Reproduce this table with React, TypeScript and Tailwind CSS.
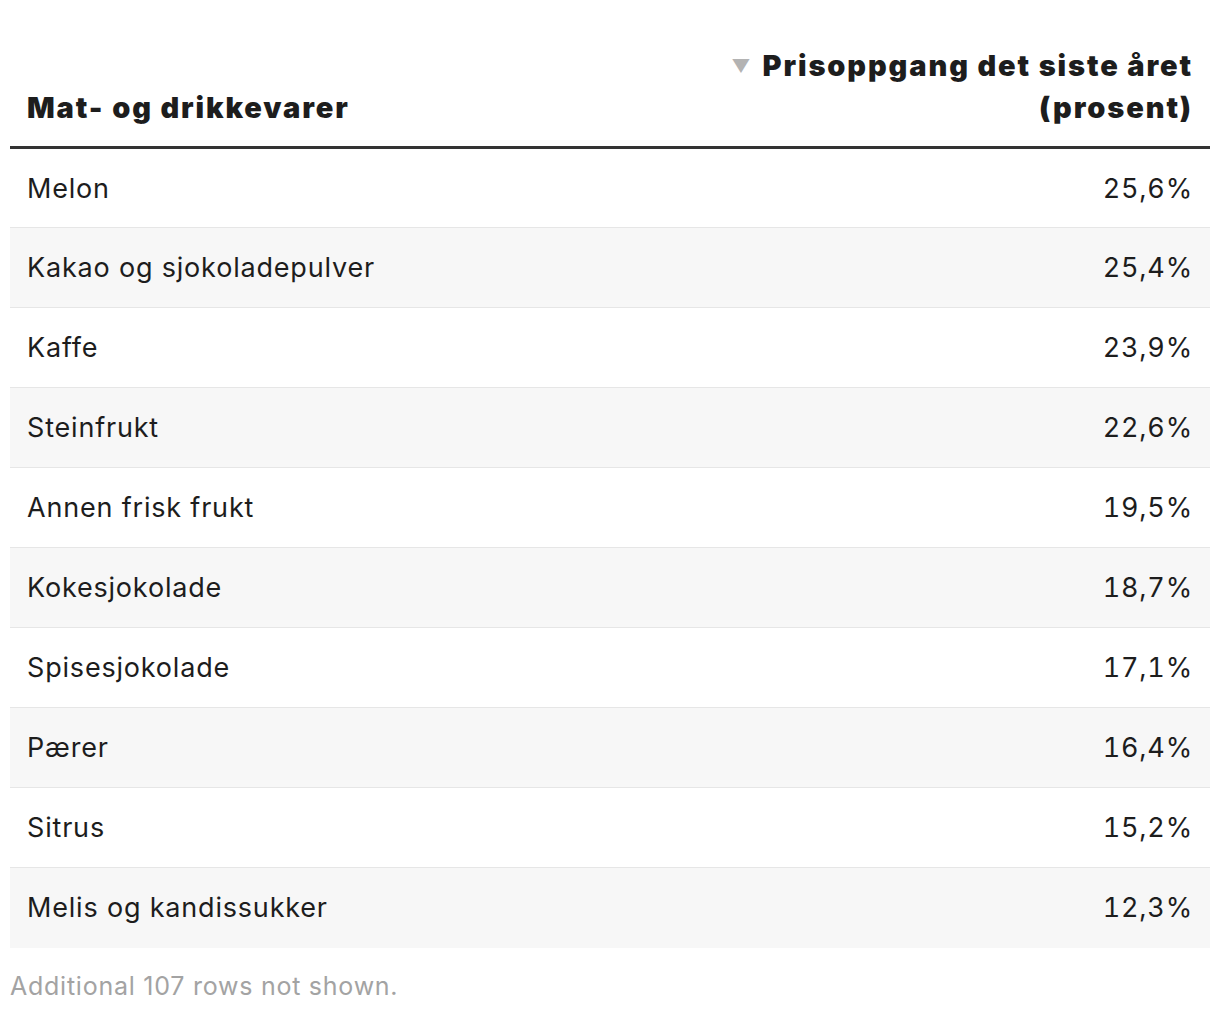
const rows: [string, string][] = [
  ["Melon", "25,6%"],
  ["Kakao og sjokoladepulver", "25,4%"],
  ["Kaffe", "23,9%"],
  ["Steinfrukt", "22,6%"],
  ["Annen frisk frukt", "19,5%"],
  ["Kokesjokolade", "18,7%"],
  ["Spisesjokolade", "17,1%"],
  ["Pærer", "16,4%"],
  ["Sitrus", "15,2%"],
  ["Melis og kandissukker", "12,3%"],
];

export default function App() {
  return (
    <div
      className="bg-white px-[10px] pt-[45px] text-[#1d1d1d]"
      style={{ fontFamily: "Inter, Roboto, 'Liberation Sans', sans-serif" }}
    >
      <table className="w-full border-collapse">
        <thead>
          <tr className="border-b-[3px] border-[#333333]">
            <th className="px-[17px] pb-[17px] text-left align-bottom text-[29px] font-black leading-[42px] tracking-[0.065em]">
              Mat- og drikkevarer
            </th>
            <th className="px-[17px] pb-[17px] text-right align-bottom text-[29px] font-black leading-[42px] tracking-[0.065em]">
              <span className="mr-[12px] inline-block align-[4px] text-[18px] tracking-normal text-[#b3b3b3]">▼</span>
              Prisoppgang det siste året
              <br />
              (prosent)
            </th>
          </tr>
        </thead>
        <tbody>
          {rows.map(([name, value], i) => (
            <tr
              key={name}
              className={`h-[80px] ${i % 2 === 1 ? "bg-[#f7f7f7]" : "bg-white"} ${
                i < rows.length - 1 ? "border-b border-[#e6e6e6]" : ""
              }`}
            >
              <td className="px-[17px] text-[27px] leading-none tracking-[0.03em]">{name}</td>
              <td className="px-[17px] text-right text-[27px] leading-none tracking-[0.03em] tabular-nums">{value}</td>
            </tr>
          ))}
        </tbody>
      </table>
      <div className="pt-[20px] text-[25px] tracking-[0.03em] text-[#a3a3a3]">Additional 107 rows not shown.</div>
    </div>
  );
}
